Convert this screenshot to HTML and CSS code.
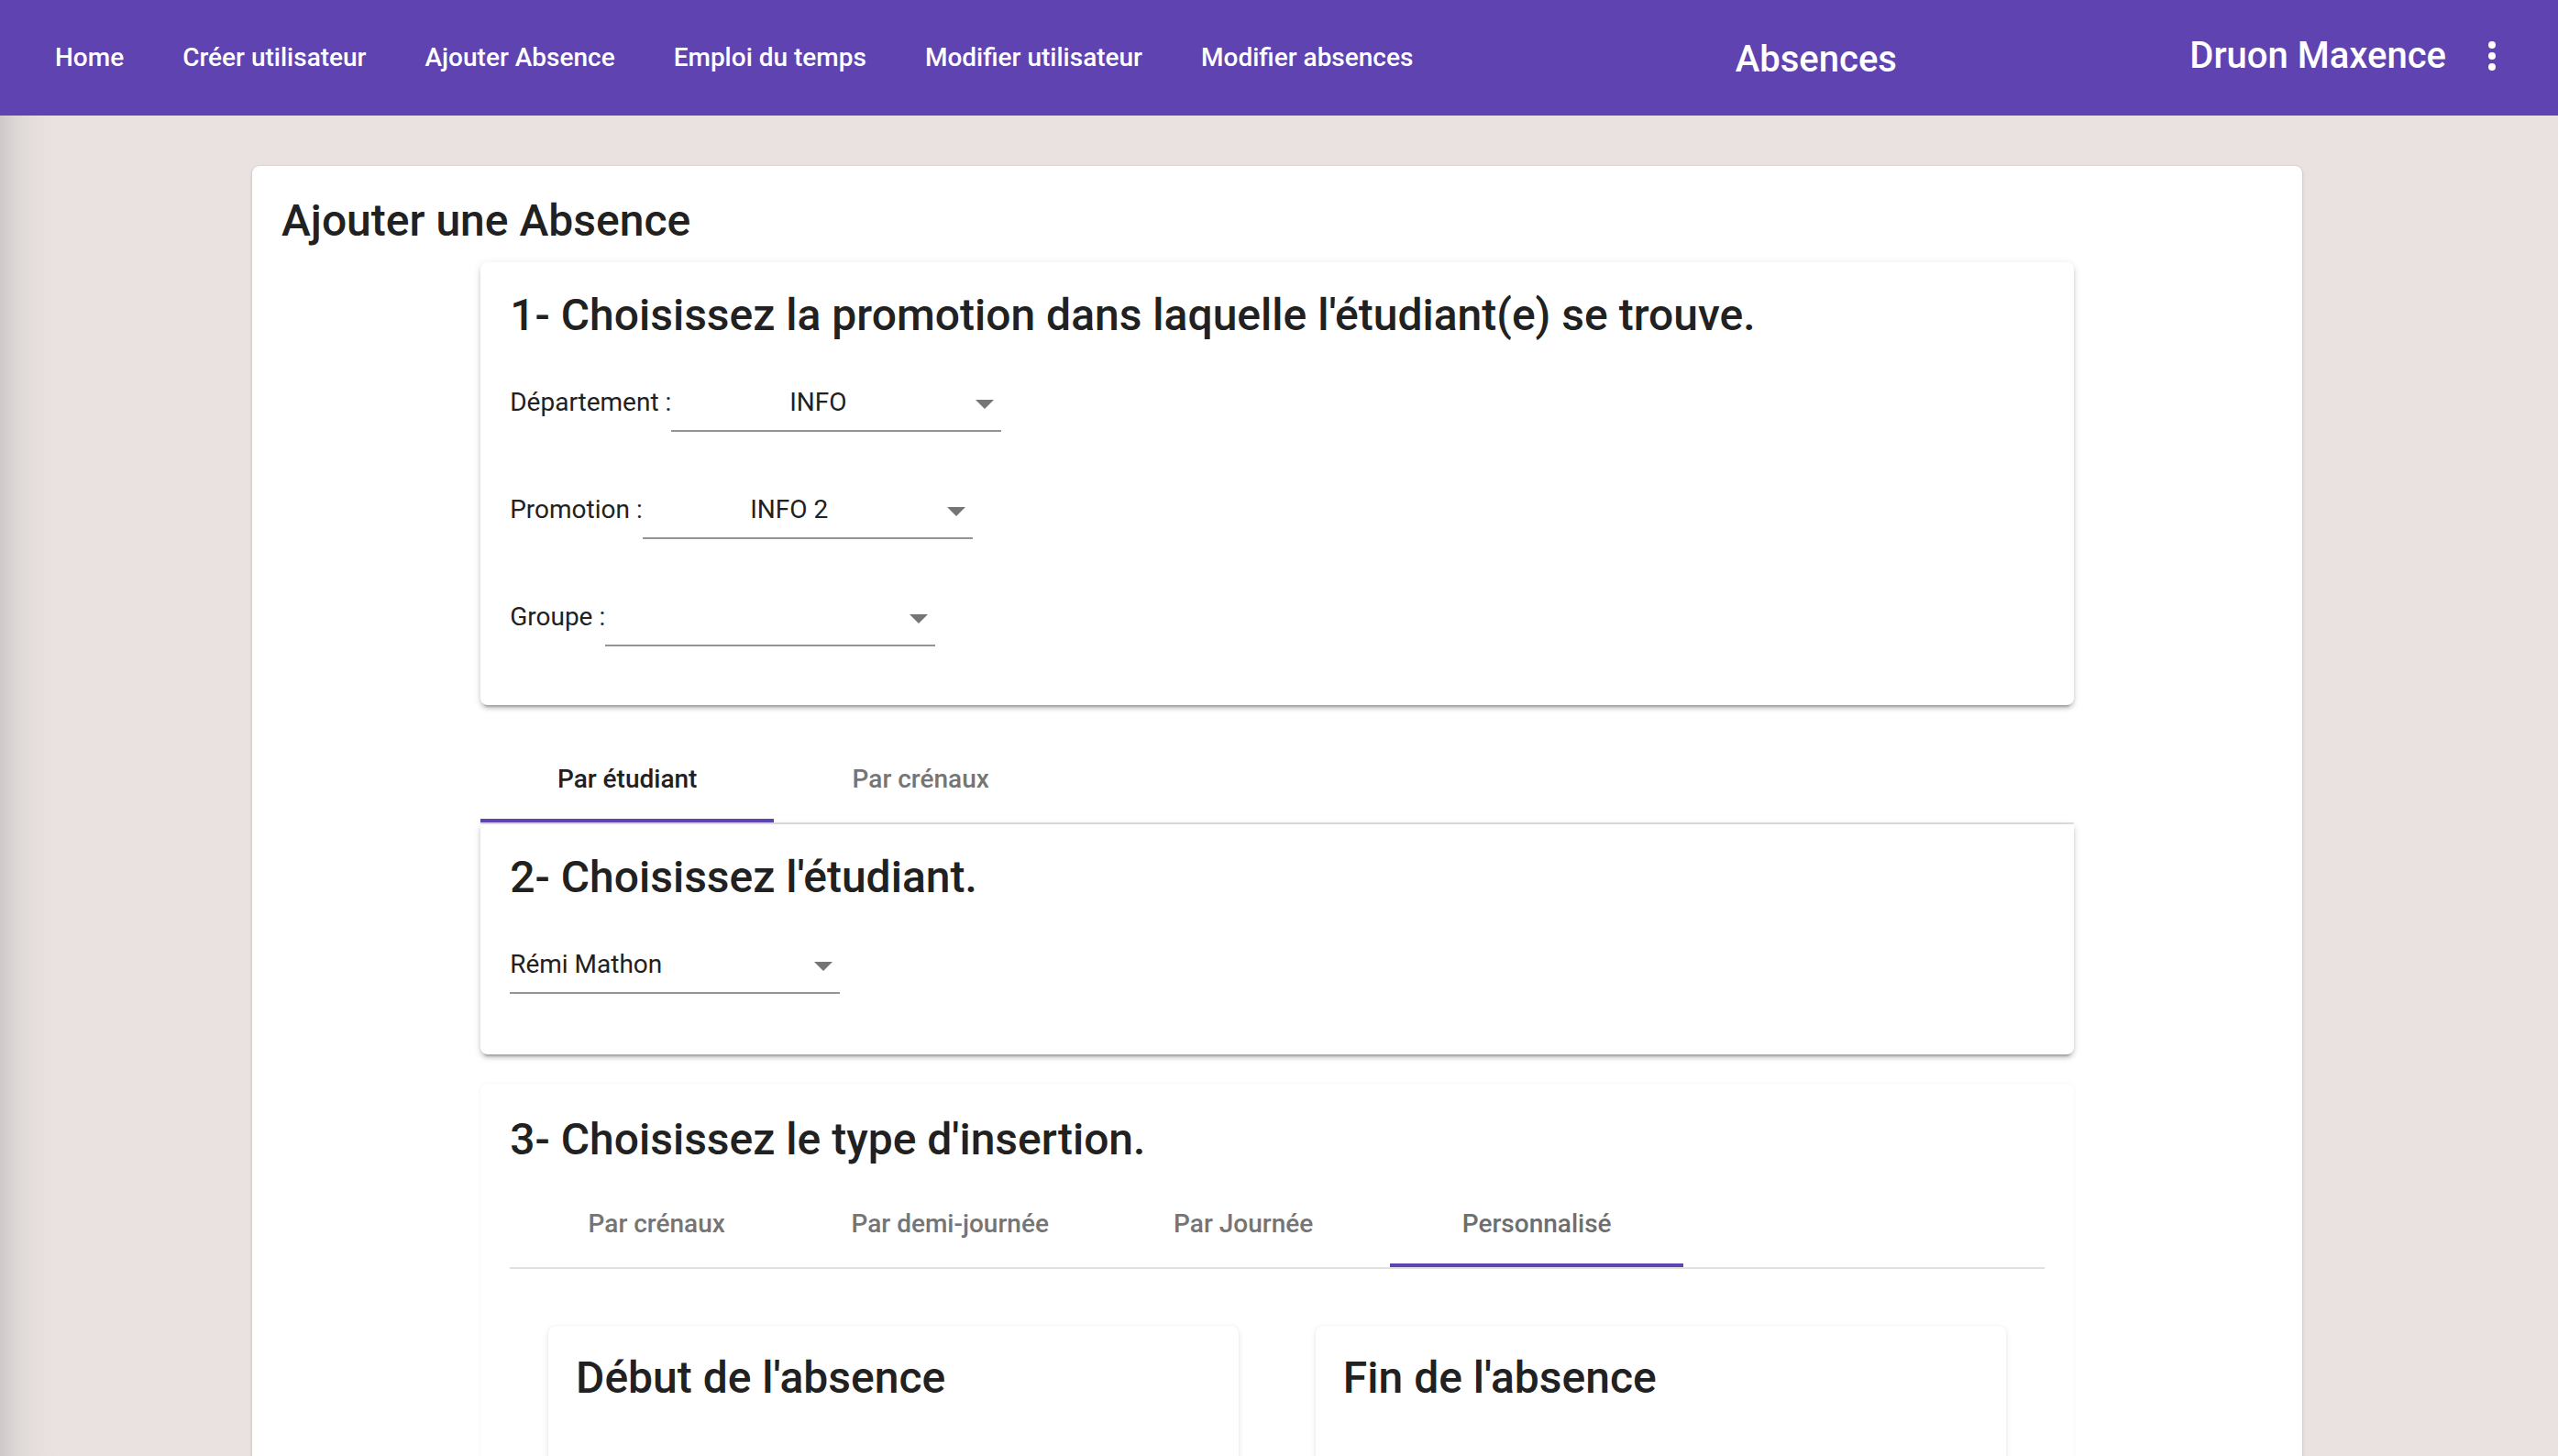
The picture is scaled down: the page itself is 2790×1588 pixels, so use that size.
FILE: index.html
```html
<!DOCTYPE html>
<html lang="fr">
<head>
<meta charset="utf-8">
<title>Absences</title>
<link rel="stylesheet" href="styles.css">
</head>
<body>
<header class="toolbar">
  <nav class="nav">
    <a class="nav-btn">Home</a>
    <a class="nav-btn">Créer utilisateur</a>
    <a class="nav-btn">Ajouter Absence</a>
    <a class="nav-btn">Emploi du temps</a>
    <a class="nav-btn">Modifier utilisateur</a>
    <a class="nav-btn">Modifier absences</a>
  </nav>
  <span class="spacer"></span>
  <span class="app-title">Absences</span>
  <span class="spacer"></span>
  <span class="user">Druon Maxence</span>
  <button class="menu-btn" aria-label="menu">
    <span class="dot"></span><span class="dot"></span><span class="dot"></span>
  </button>
</header>

<main class="page">
  <section class="main-card">
    <h1 class="page-title">Ajouter une Absence</h1>

    <div class="section">
      <div class="card card-1">
        <h2 class="section-title">1- Choisissez la promotion dans laquelle l'étudiant(e) se trouve.</h2>
        <div class="field-row">
          <span class="field-label">Département :</span>
          <div class="select centered"><span class="value">INFO</span><span class="arrow"></span></div>
        </div>
        <div class="field-row">
          <span class="field-label">Promotion :</span>
          <div class="select centered"><span class="value">INFO 2</span><span class="arrow"></span></div>
        </div>
        <div class="field-row">
          <span class="field-label">Groupe :</span>
          <div class="select centered"><span class="value"></span><span class="arrow"></span></div>
        </div>
      </div>

      <div class="tabs tabs-main">
        <div class="tab active">Par étudiant</div>
        <div class="tab">Par crénaux</div>
      </div>

      <div class="card card-2">
        <h2 class="section-title">2- Choisissez l'étudiant.</h2>
        <div class="field-row">
          <div class="select"><span class="value">Rémi Mathon</span><span class="arrow"></span></div>
        </div>
      </div>

      <div class="card card-3">
        <h2 class="section-title">3- Choisissez le type d'insertion.</h2>
        <div class="tabs tabs-type">
          <div class="tab">Par crénaux</div>
          <div class="tab">Par demi-journée</div>
          <div class="tab">Par Journée</div>
          <div class="tab active muted">Personnalisé</div>
        </div>
        <div class="halves">
          <div class="sub-card">
            <h2 class="section-title">Début de l'absence</h2>
          </div>
          <div class="sub-card">
            <h2 class="section-title">Fin de l'absence</h2>
          </div>
        </div>
      </div>
    </div>
  </section>
</main>
</body>
</html>
```

FILE: styles.css
```css
* { box-sizing: border-box; }

html, body {
  margin: 0;
  padding: 0;
}

body {
  font-family: Roboto, "Liberation Sans", Arial, sans-serif;
  background: linear-gradient(to right, #cfcac9 0px, #ddd7d6 18px, #e6dfde 40px, #eae2e1 64px);
  background-color: #eae2e1;
  color: #212121;
  min-height: 1588px;
  overflow: hidden;
}

/* ---------- toolbar ---------- */
.toolbar {
  height: 126px;
  background: #5f43b1;
  color: #fff;
  display: flex;
  align-items: center;
  padding: 0 24px 0 28px;
}

.nav {
  display: flex;
  align-items: center;
}

.nav-btn {
  font-size: 28px;
  font-weight: 500;
  padding: 0 32px;
  line-height: 72px;
  color: #fff;
  white-space: nowrap;
}

.spacer { flex: 1; }

.app-title {
  font-size: 40px;
  font-weight: 500;
  padding-top: 2px;
}

.user {
  font-size: 40px;
  font-weight: 500;
  margin-bottom: 6px;
}

.menu-btn {
  width: 96px;
  height: 96px;
  border: 0;
  background: transparent;
  display: flex;
  flex-direction: column;
  align-items: center;
  justify-content: center;
  gap: 4px;
  padding: 0;
  margin-left: 2px;
  margin-bottom: 4px;
}

.dot {
  width: 8px;
  height: 8px;
  border-radius: 50%;
  background: #fff;
}

/* ---------- page ---------- */
.page {
  padding-top: 55px;
}

.main-card {
  width: calc(80% + 4px);
  margin: 0 0 0 calc(10% - 4px);
  background: #fff;
  border-radius: 8px;
  padding: 35px 32px 200px;
  box-shadow: 0 2px 4px rgba(0,0,0,0.12), 0 0 2px rgba(0,0,0,0.14);
}

.page-title {
  margin: 0 0 20px;
  font-size: 48px;
  line-height: 50px;
  font-weight: 500;
  color: #212121;
}

.section {
  width: 80%;
  margin: 0 auto;
}

.card {
  background: #fff;
  border-radius: 8px;
  padding: 33px 32px 64px;
  box-shadow: 0 6px 2px -4px rgba(0,0,0,0.2), 0 4px 4px 0 rgba(0,0,0,0.14), 0 2px 10px 0 rgba(0,0,0,0.12);
}

.section-title {
  margin: 0 0 40px;
  font-size: 48px;
  line-height: 50px;
  font-weight: 500;
  color: #212121;
}

.field-row {
  display: flex;
  align-items: flex-start;
  margin-bottom: 55px;
}
.field-row:last-child { margin-bottom: 0; }

.field-label {
  font-size: 28px;
  line-height: 60px;
  color: #212121;
}

.select {
  position: relative;
  width: 360px;
  height: 62px;
  border-bottom: 2px solid #949494;
  padding-right: 40px;
  font-size: 28px;
  line-height: 60px;
  color: #212121;
}
.select.centered .value {
  display: block;
  text-align: center;
}

.arrow {
  position: absolute;
  right: 8px;
  top: 27px;
  width: 0;
  height: 0;
  border-left: 10px solid transparent;
  border-right: 10px solid transparent;
  border-top: 10px solid #757575;
}

/* ---------- tabs ---------- */
.tabs {
  display: flex;
  border-bottom: 2px solid #e0e0e0;
}

.tabs-main {
  margin-top: 32px;
}

.tab {
  width: 320px;
  height: 96px;
  display: flex;
  align-items: center;
  justify-content: center;
  font-size: 28px;
  font-weight: 500;
  color: #757575;
}

.tab.active {
  color: #212121;
  box-shadow: inset 0 -4px 0 #5f43b1;
}
.tab.active.muted { color: #6e6e6e; }

.card-2 {
  border-radius: 0 0 8px 8px;
  padding-bottom: 66px;
}

.card-3 {
  margin-top: 32px;
  padding-top: 36px;
  padding-bottom: 200px;
  box-shadow: 0 0 4px rgba(0,0,0,0.06);
}
.card-3 .section-title { margin-bottom: 18px; }

.halves {
  display: flex;
  justify-content: space-around;
  margin-top: 62px;
}

.sub-card {
  width: 45%;
  height: 320px;
  background: #fff;
  border-radius: 8px;
  padding: 32px 30px;
  box-shadow: 0 2px 6px rgba(0,0,0,0.10), 0 0 2px rgba(0,0,0,0.06);
}
```
